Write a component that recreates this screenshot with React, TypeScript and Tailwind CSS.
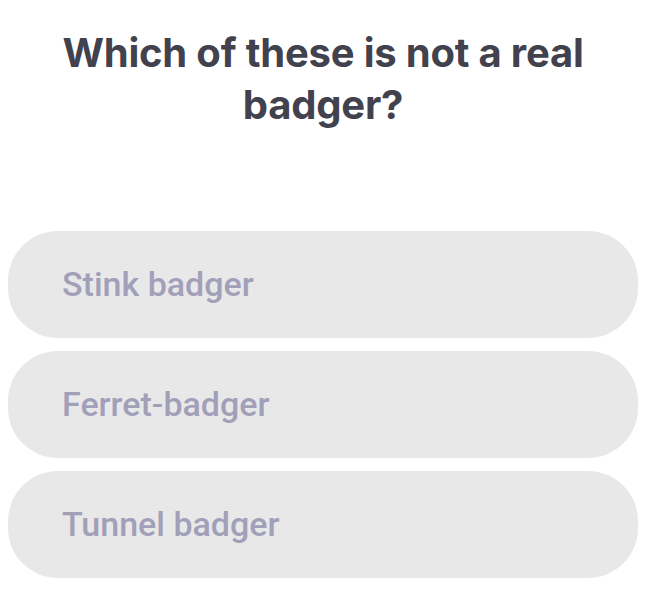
const options = ["Stink badger", "Ferret-badger", "Tunnel badger"];

export default function App() {
  return (
    <div className="w-[646px] h-[592px] bg-white overflow-hidden">
      <h1 className="pt-[27px] px-4 text-center text-[40px] leading-[52px] font-bold tracking-[-0.005em] text-[#42424e] font-['Inter',sans-serif]">
        Which of these is not a real
        <br />
        badger?
      </h1>
      <div className="mt-[100px] px-2 flex flex-col gap-[13px]">
        {options.map((o) => (
          <button
            key={o}
            className="h-[107px] w-full rounded-[50px] bg-[#e8e8e9] pl-[54px] text-left text-[34px] font-medium text-[#a29fb9] font-['Roboto',sans-serif]"
          >
            {o}
          </button>
        ))}
      </div>
    </div>
  );
}
